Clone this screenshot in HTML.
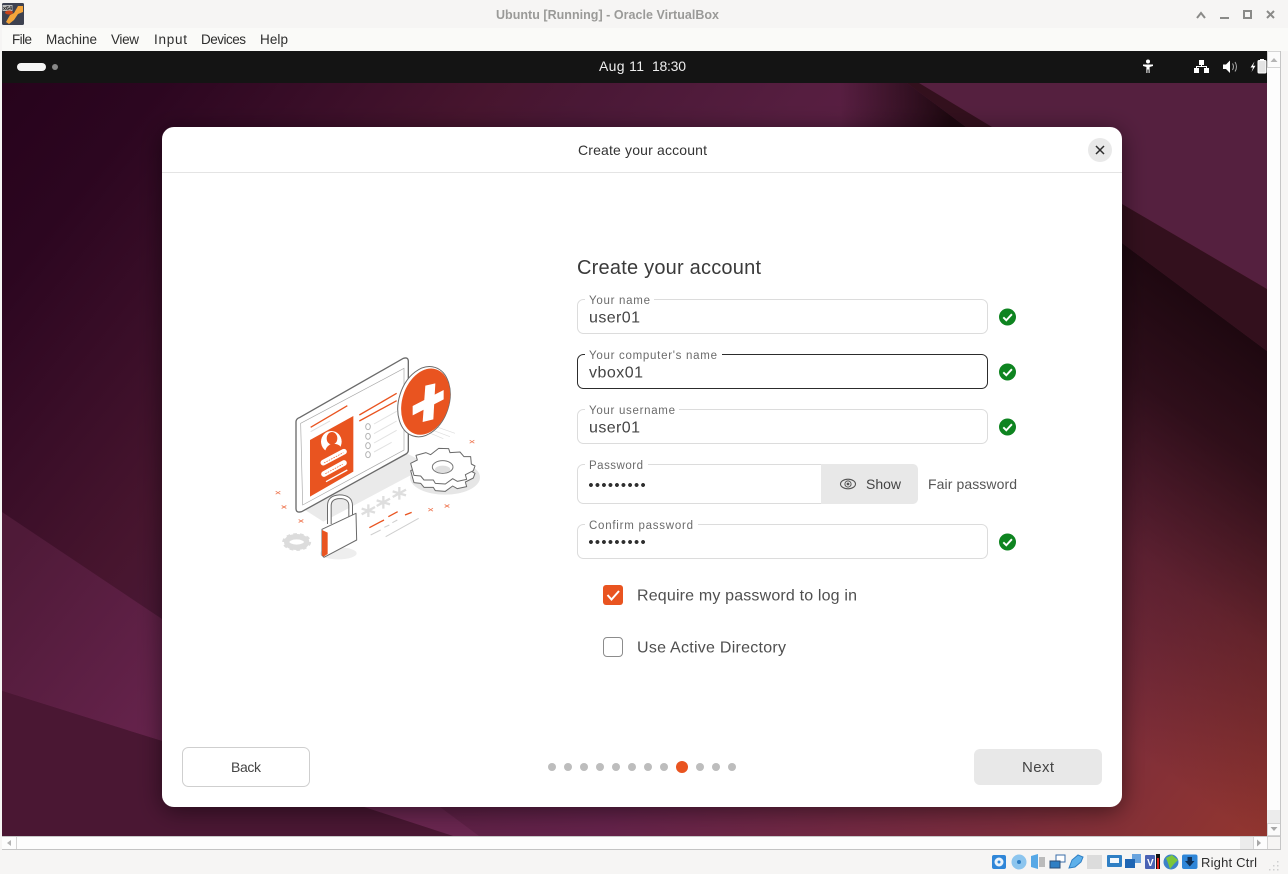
<!DOCTYPE html>
<html lang="en">
<head>
<meta charset="utf-8">
<title>Ubuntu [Running] - Oracle VirtualBox</title>
<style>
html,body{margin:0;padding:0;background:#f6f5f4;width:1288px;height:874px;overflow:hidden}
svg{display:block}
text{font-family:"Liberation Sans",sans-serif}
.m{font-size:13.5px;fill:#2e2e2e}
.l{font-size:11.5px;fill:#6b6b6b}
.v{font-size:16px;fill:#444}
.b{font-size:14px;fill:#444}
</style>
</head>
<body>
<svg width="1288" height="874" viewBox="0 0 1288 874" xmlns="http://www.w3.org/2000/svg">
<defs>
<linearGradient id="base" gradientUnits="userSpaceOnUse" x1="2" y1="83" x2="1160.5" y2="1009.8">
<stop offset="0" stop-color="#27031c"/>
<stop offset=".084" stop-color="#2c0620"/>
<stop offset=".176" stop-color="#3a0e28"/>
<stop offset=".26" stop-color="#47152e"/>
<stop offset=".316" stop-color="#4a1836"/>
<stop offset=".428" stop-color="#561e40"/>
<stop offset=".63" stop-color="#64224a"/>
<stop offset=".84" stop-color="#7a2c3c"/>
<stop offset=".983" stop-color="#93362f"/>
</linearGradient>
<linearGradient id="rs" gradientUnits="userSpaceOnUse" x1="1195" y1="297" x2="955" y2="617">
<stop offset="0" stop-color="#1e0810" stop-opacity="1"/>
<stop offset=".25" stop-color="#1e0810" stop-opacity=".8"/>
<stop offset=".6" stop-color="#1e0810" stop-opacity=".3"/>
<stop offset="1" stop-color="#1e0810" stop-opacity="0"/>
</linearGradient>
<linearGradient id="ts" gradientUnits="userSpaceOnUse" x1="840" y1="100" x2="950" y2="100">
<stop offset="0" stop-color="#1e0810" stop-opacity="0"/>
<stop offset="1" stop-color="#1e0810" stop-opacity="1"/>
</linearGradient>
<linearGradient id="band" gradientUnits="userSpaceOnUse" x1="2" y1="560" x2="300" y2="800">
<stop offset="0" stop-color="#4f1a38"/>
<stop offset=".6" stop-color="#66234c"/>
<stop offset="1" stop-color="#6a2650"/>
</linearGradient>
<filter id="sh" x="-10%" y="-10%" width="120%" height="120%">
<feDropShadow dx="0" dy="4" stdDeviation="12" flood-color="#000" flood-opacity=".5"/>
</filter>
<g id="ok"><circle r="8.5" fill="#0e8420"/><path d="M-4.2,.3 L-1.2,3.3 L4.4,-2.8" fill="none" stroke="#fff" stroke-width="1.9"/></g>
<g id="ast"><path d="M-20,-6 L20,6 M20,-11 L-20,11 M0,-19 L0,19" stroke="#dedede" stroke-width="7" fill="none"/></g>
<g id="xx"><path d="M-7,-4.5 L7,4.5 M7,-4.5 L-7,4.5" stroke="#ef7a55" stroke-width="2.4" fill="none"/></g>
<polygon id="gear" points="452,370 472,360 468,346 498,338 512,344 536,325 566,326 570,338 600,336 612,350 632,350 634,372 645,378 640,392 616,404 620,418 592,424 578,416 556,432 526,430 520,420 492,420 482,408 462,406 458,392" fill="#fff" stroke="#6a6a6a" stroke-width="3" stroke-linejoin="round"/>
</defs>

<!-- window chrome -->
<rect width="1288" height="874" fill="#f6f5f4"/>
<rect x="2" y="28" width="1286" height="23" fill="#fafaf8"/>
<!-- vbox icon -->
<rect x="2" y="3" width="22" height="22" rx="1.5" fill="#3d4150"/>
<path d="M6,22 L10,15 L14,13 L18,6 L23,6 L23,12 L18,14 L14,20 L9,24 Z" fill="#f5a53a"/>
<rect x="2.5" y="5" width="10" height="6" fill="#b9b9b9"/>
<ellipse cx="9" cy="12.5" rx="4" ry="2" fill="#c9431a"/>
<text x="3" y="10" style="font-size:5.5px;font-weight:bold;fill:#222" textLength="9">x64</text>
<text x="496" y="19" style="font-size:12.5px;font-weight:bold;fill:#9a9a98" textLength="223">Ubuntu [Running] - Oracle VirtualBox</text>
<!-- title buttons -->
<path d="M1197,18 L1201,13 L1205,18" fill="none" stroke="#8a8a88" stroke-width="2"/>
<path d="M1220,18 H1229" stroke="#8a8a88" stroke-width="2"/>
<rect x="1244" y="11" width="7" height="7" fill="none" stroke="#8a8a88" stroke-width="2"/>
<path d="M1267,11 L1274,18 M1274,11 L1267,18" stroke="#8a8a88" stroke-width="2"/>
<!-- menu -->
<text class="m" x="12" y="44" textLength="20">File</text>
<text class="m" x="46" y="44" textLength="51">Machine</text>
<text class="m" x="111" y="44" textLength="28">View</text>
<text class="m" x="154" y="44" textLength="33">Input</text>
<text class="m" x="201" y="44" textLength="45">Devices</text>
<text class="m" x="260" y="44" textLength="28">Help</text>

<!-- guest wallpaper -->
<rect x="2" y="83" width="1265" height="753" fill="url(#base)"/>
<polygon points="800,83 907,83 966,127 800,127" fill="url(#ts)"/>
<polygon points="919,83 1267,83 1267,289 1122,204 992,127" fill="#55203f"/>
<polygon points="907,83 919,83 992,127 1122,204 1267,289 1267,351 1122,243 966,127" fill="#33101d"/>
<polygon points="1122,243 1267,351 1267,836 1122,836" fill="url(#rs)"/>
<polygon points="2,512 162,619 440,807 479,836 453,836 364,807 162,741 2,691" fill="url(#band)"/>
<polygon points="2,691 162,741 364,807 453,836 2,836" fill="#4a1733"/>

<!-- guest top bar -->
<rect x="2" y="51" width="1265" height="32" fill="#141414"/>
<rect x="17" y="63" width="29" height="8" rx="4" fill="#f5f5f5"/>
<circle cx="55" cy="67" r="3" fill="#888"/>
<text x="599" y="71" style="font-size:14px;fill:#eeeeee" textLength="45">Aug 11</text>
<text x="652" y="71" style="font-size:14px;fill:#eeeeee" textLength="34">18:30</text>
<!-- accessibility -->
<circle cx="1148" cy="61.5" r="2" fill="#fff"/>
<path d="M1143,64.5 H1153 V66 L1149.6,67 V73 H1148.6 V69.5 H1147.4 V73 H1146.4 V67 L1143,66 Z" fill="#fff"/>
<!-- network -->
<rect x="1199" y="60" width="5" height="5" fill="#fff"/>
<rect x="1194" y="68" width="5" height="5" fill="#fff"/>
<rect x="1204" y="68" width="5" height="5" fill="#fff"/>
<path d="M1201.5,65 V66.5 M1196.5,68 V66.5 H1206.5 V68" fill="none" stroke="#fff" stroke-width="1"/>
<!-- volume -->
<path d="M1223,64.5 H1226 L1230,60.5 V73 L1226,69 H1223 Z" fill="#fff"/>
<path d="M1232.5,63.5 Q1234.5,66.7 1232.5,70 M1235,62 Q1238,66.7 1235,71.5" fill="none" stroke="#aaa" stroke-width="1"/>
<!-- battery -->
<path d="M1254.5,61.5 L1250.5,67.5 H1253 L1251.5,72 L1255.5,65.8 H1253 Z" fill="#fff"/>
<rect x="1258" y="60.5" width="8" height="12.5" rx="1" fill="#e4e4e4" stroke="#fff"/>
<rect x="1260" y="59" width="4" height="1.5" fill="#fff"/>

<!-- scrollbars -->
<rect x="1267" y="51" width="14" height="785" fill="#fdfdfd"/>
<rect x="1267.5" y="51.5" width="13" height="16" fill="#fbfbfb" stroke="#d4d4d4"/>
<path d="M1270.5,62 L1274,58 L1277.5,62 Z" fill="#b4b4b4"/>
<rect x="1267" y="810" width="14" height="13" fill="#ececec"/>
<rect x="1267.5" y="823.5" width="13" height="12" fill="#fbfbfb" stroke="#d4d4d4"/>
<path d="M1270.5,827 L1274,831 L1277.5,827 Z" fill="#a8a8a8"/>
<path d="M1280.5,51 V849" stroke="#c6c6c6"/>
<rect x="2" y="836" width="1265" height="13" fill="#fdfdfd"/>
<path d="M2,836.5 H1281" stroke="#c8c8c8"/>
<path d="M2,849.5 H1281" stroke="#c4c4c4"/>
<path d="M16.5,837 V849" stroke="#d4d4d4"/>
<path d="M11,840 L7,843 L11,846 Z" fill="#b4b4b4"/>
<rect x="1240" y="837" width="13" height="12" fill="#ececec"/>
<path d="M1253.5,837 V849 M1267.5,837 V849" stroke="#d4d4d4"/>
<path d="M1257,839.5 L1261,843 L1257,846.5 Z" fill="#a8a8a8"/>

<!-- dialog -->
<rect x="162" y="127" width="960" height="680" rx="12" fill="#fff" filter="url(#sh)"/>
<path d="M162,172.5 H1122" stroke="#e4e4e4"/>
<text x="578" y="155" style="font-size:14px;fill:#333" textLength="129">Create your account</text>
<circle cx="1100" cy="150" r="12" fill="#e9e9e9"/>
<path d="M1096,146 L1104,154 M1104,146 L1096,154" stroke="#2e2e2e" stroke-width="1.5"/>

<text x="577" y="274" style="font-size:20px;fill:#3a3a3a" textLength="184">Create your account</text>

<!-- fields -->
<rect x="577.5" y="299.5" width="410" height="34" rx="6" fill="#fff" stroke="#dcdcdc"/>
<rect x="585" y="297" width="69" height="5" fill="#fff"/>
<text class="l" x="589" y="304" textLength="61">Your name</text>
<text class="v" x="589" y="322.5" textLength="51">user01</text>
<use href="#ok" x="1007.5" y="317"/>

<rect x="577.5" y="354.5" width="410" height="34" rx="6" fill="#fff" stroke="#2c2c2c"/>
<rect x="585" y="352" width="137" height="5" fill="#fff"/>
<text class="l" x="589" y="359" textLength="128">Your computer's name</text>
<text class="v" x="589" y="377.5" textLength="54">vbox01</text>
<use href="#ok" x="1007.5" y="372"/>

<rect x="577.5" y="409.5" width="410" height="34" rx="6" fill="#fff" stroke="#dcdcdc"/>
<rect x="585" y="407" width="94" height="5" fill="#fff"/>
<text class="l" x="589" y="414" textLength="86">Your username</text>
<text class="v" x="589" y="432.5" textLength="51">user01</text>
<use href="#ok" x="1007.5" y="427"/>

<rect x="577.5" y="464.5" width="340" height="39" rx="6" fill="#fff" stroke="#dcdcdc"/>
<path d="M821,464 H912 Q918,464 918,470 V498 Q918,504 912,504 H821 Z" fill="#e8e8e8"/>
<rect x="585" y="462" width="63" height="5" fill="#fff"/>
<text class="l" x="589" y="469" textLength="54">Password</text>
<text x="588.5" y="489.7" style="font-size:14px;fill:#2e2e2e;font-weight:bold" textLength="57">•••••••••</text>
<ellipse cx="848" cy="484" rx="7.5" ry="4.8" fill="none" stroke="#555" stroke-width="1.1"/>
<circle cx="848" cy="484" r="3.1" fill="none" stroke="#555" stroke-width="1"/>
<circle cx="848" cy="484" r="1.4" fill="#555"/>
<text class="b" x="866" y="489" textLength="35">Show</text>
<text class="b" x="928" y="489" textLength="89" style="fill:#555">Fair password</text>

<rect x="577.5" y="524.5" width="410" height="34" rx="6" fill="#fff" stroke="#dcdcdc"/>
<rect x="585" y="522" width="113" height="5" fill="#fff"/>
<text class="l" x="589" y="529" textLength="104">Confirm password</text>
<text x="588.5" y="546.7" style="font-size:14px;fill:#2e2e2e;font-weight:bold" textLength="57">•••••••••</text>
<use href="#ok" x="1007.5" y="542"/>

<!-- checkboxes -->
<rect x="603" y="585" width="20" height="20" rx="3" fill="#e95420"/>
<path d="M607.5,595 L611.5,599.5 L619,591" fill="none" stroke="#fff" stroke-width="2"/>
<text class="v" x="637" y="600.5" textLength="220" style="fill:#4f4f4f">Require my password to log in</text>
<rect x="603.5" y="637.5" width="19" height="19" rx="3.5" fill="#fff" stroke="#8c8c8c"/>
<text class="v" x="637" y="652.5" textLength="149" style="fill:#4f4f4f">Use Active Directory</text>

<!-- footer -->
<rect x="182.5" y="747.5" width="127" height="39" rx="6" fill="#fff" stroke="#cfcfcf"/>
<text x="231" y="772" style="font-size:14px;fill:#444" textLength="30">Back</text>
<rect x="974" y="749" width="128" height="36" rx="6" fill="#e8e8e8"/>
<text x="1022" y="772" style="font-size:15px;fill:#444" textLength="32">Next</text>
<g fill="#bdbdbd">
<circle cx="552" cy="767" r="4"/><circle cx="568" cy="767" r="4"/><circle cx="584" cy="767" r="4"/><circle cx="600" cy="767" r="4"/><circle cx="616" cy="767" r="4"/><circle cx="632" cy="767" r="4"/><circle cx="648" cy="767" r="4"/><circle cx="664" cy="767" r="4"/><circle cx="700" cy="767" r="4"/><circle cx="716" cy="767" r="4"/><circle cx="732" cy="767" r="4"/>
</g>
<circle cx="682" cy="767" r="6" fill="#e95420"/>

<!-- illustration -->
<g transform="translate(260,340) scale(.33333)">
<polygon points="135,510 440,340 510,375 190,545" fill="#eaeaea"/>
<ellipse cx="555" cy="412" rx="105" ry="52" fill="#e6e6e6"/>
<ellipse cx="430" cy="180" rx="42" ry="72" fill="#dcdcdc"/>
<path d="M500,250 L585,280 M495,262 L570,290 M500,275 L550,296" stroke="#dedede" stroke-width="2" fill="none"/>
<path d="M120,232 L430,55 Q445,50 445,65 L445,330 Q445,338 438,342 L125,515 Q108,520 108,505 L108,245 Q108,236 120,232 Z" fill="#fff" stroke="#6a6a6a" stroke-width="4"/>
<polygon points="122,250 432,85 432,330 128,495" fill="#fff" stroke="#a8a8a8" stroke-width="2"/>
<path d="M152,262 L262,197 M298,225 L410,160 M298,243 L410,182" stroke="#e95420" stroke-width="4" fill="none"/>
<path d="M152,275 L210,243" stroke="#dedede" stroke-width="3"/>
<polygon points="150,300 280,228 280,395 150,470" fill="#e95420"/>
<ellipse cx="214" cy="305" rx="31" ry="32" fill="#fff"/>
<ellipse cx="216" cy="295" rx="16" ry="19" fill="#e95420"/>
<path d="M193,345 Q196,318 214,312 Q232,310 240,318 L245,330 Z" fill="#e95420"/>
<path d="M190,368 L252,335 M192,402 L252,369" stroke="#fff" stroke-width="17" stroke-linecap="round"/>
<path d="M192,369 L250,338 M196,401 L248,373" stroke="#e95420" stroke-width="2" stroke-dasharray="5 3"/>
<path d="M198,425 L262,390" stroke="#fff" stroke-width="4"/>
<g fill="#fff" stroke="#b5b5b5" stroke-width="3">
<ellipse cx="324" cy="260" rx="7" ry="9"/><ellipse cx="324" cy="289" rx="7" ry="9"/><ellipse cx="324" cy="317" rx="7" ry="9"/><ellipse cx="324" cy="344" rx="7" ry="9"/>
</g>
<path d="M342,252 L410,214 M342,281 L410,243 M342,309 L410,271 M342,336 L395,307" stroke="#e2e2e2" stroke-width="3"/>
<ellipse cx="492" cy="185" rx="75" ry="108" transform="rotate(18 492 185)" fill="#fff" stroke="#6a6a6a" stroke-width="3"/>
<ellipse cx="497" cy="185" rx="70" ry="102" transform="rotate(18 497 185)" fill="#e95420"/>
<polygon points="496,137 526,130 520,238 488,246" fill="#fff"/>
<polygon points="458,198 551,150 551,178 458,226" fill="#fff"/>
<use href="#gear" x="0" y="22"/>
<use href="#gear"/>
<ellipse cx="548" cy="381" rx="31" ry="19" fill="#fff" stroke="#777" stroke-width="3"/>
<ellipse cx="548" cy="388" rx="23" ry="11" fill="#dfdfdf"/>
<use href="#ast" x="325" y="512"/><use href="#ast" x="370" y="487"/><use href="#ast" x="418" y="460"/>
<path d="M328,563 L372,540 M385,530 L413,515 M435,525 L455,517" stroke="#e95420" stroke-width="4"/>
<path d="M332,585 L362,570 M373,562 L388,555 M397,548 L412,540 M377,590 L476,535" stroke="#cfcfcf" stroke-width="3"/>
<use href="#xx" x="54" y="458"/><use href="#xx" x="72" y="501"/><use href="#xx" x="123" y="543"/><use href="#xx" x="512" y="509"/><use href="#xx" x="561" y="498"/><use href="#xx" x="636" y="305"/>
<ellipse cx="110" cy="606" rx="30" ry="16" fill="none" stroke="#dcdcdc" stroke-width="16"/>
<ellipse cx="110" cy="606" rx="40" ry="23" fill="none" stroke="#dcdcdc" stroke-width="7" stroke-dasharray="11 9"/>
<ellipse cx="235" cy="640" rx="55" ry="18" fill="#eeeeee"/>
<path d="M208,552 L208,497 Q208,472 238,470 Q272,470 272,497 L272,535" fill="none" stroke="#6a6a6a" stroke-width="14"/>
<path d="M208,552 L208,497 Q208,472 238,470 Q272,470 272,497 L272,535" fill="none" stroke="#fff" stroke-width="8"/>
<polygon points="186,568 288,520 290,600 192,652 186,646" fill="#fff" stroke="#6a6a6a" stroke-width="3" stroke-linejoin="round"/>
<polygon points="186,570 203,578 203,642 191,650 186,646" fill="#e95420"/>
</g>

<!-- status bar icons -->
<rect x="992" y="855" width="14" height="14" rx="2" fill="#2f86d8"/><circle cx="999" cy="862" r="4.5" fill="#eaf3fb"/><circle cx="999" cy="862" r="1.5" fill="#2f86d8"/>
<circle cx="1019" cy="862" r="7.5" fill="#8cc5ee"/><circle cx="1019" cy="862" r="2" fill="#2f7fc4"/>
<path d="M1031,856 L1038,854 V869 L1031,867 Z" fill="#56a8e6"/><rect x="1039" y="857" width="6" height="10" fill="#bbb"/>
<rect x="1056" y="855" width="9" height="7" fill="#fff" stroke="#3a6da8"/><rect x="1050" y="861" width="10" height="7" fill="#2f7fc4" stroke="#2a4d78"/>
<path d="M1069,868 L1072,860 L1078,855 L1083,857 L1081,862 L1075,867 Z" fill="#5eb0ea" stroke="#2f7fc4"/>
<rect x="1087" y="855" width="15" height="14" fill="#dcdcdc"/>
<rect x="1107" y="855" width="15" height="12" rx="1" fill="#2f7fc4"/><rect x="1110" y="858" width="9" height="5" fill="#f3f8fd"/>
<rect x="1132" y="854" width="9" height="9" fill="#6aa4de"/><rect x="1125" y="859" width="10" height="9" fill="#1f66b4"/>
<rect x="1145" y="855" width="10" height="14" rx="1" fill="#4a62b4"/>
<text x="1147" y="866" style="font-size:10px;font-weight:bold;fill:#fff" textLength="6">V</text>
<rect x="1156" y="854" width="4" height="15" fill="#111"/><rect x="1157" y="858" width="2" height="11" fill="#e0201a"/>
<circle cx="1171" cy="862" r="7.5" fill="#3d82c8"/><path d="M1166,858 L1172,855 L1178,860 L1174,864 L1170,869 L1168,863 Z" fill="#7cc63a"/>
<rect x="1182" y="854.5" width="15.5" height="14.5" rx="2" fill="#2f86d8"/><path d="M1187.5,857 H1192 V861 H1194.5 L1189.8,866.5 L1185,861 H1187.5 Z" fill="#10325a"/>
<text x="1201" y="867" style="font-size:13px;fill:#2e2e2e" textLength="56">Right Ctrl</text>
<g fill="#cfcfcf"><rect x="1277" y="861" width="1.5" height="1.5"/><rect x="1273" y="865" width="1.5" height="1.5"/><rect x="1277" y="865" width="1.5" height="1.5"/><rect x="1269" y="869" width="1.5" height="1.5"/><rect x="1273" y="869" width="1.5" height="1.5"/><rect x="1277" y="869" width="1.5" height="1.5"/></g>
</svg>
</body>
</html>
